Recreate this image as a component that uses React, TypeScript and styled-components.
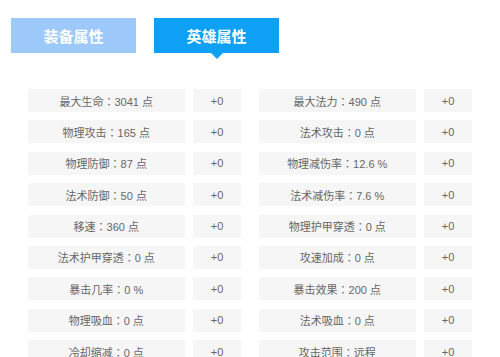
import React, { FunctionComponent } from "react";
import styled, { createGlobalStyle } from "styled-components";

const GlobalStyle = createGlobalStyle`
  body {
    margin: 0;
    background: #fff;
    font-family: "Liberation Sans", "Noto Sans CJK JP", sans-serif;
  }
`;

const Page = styled.div`
  padding: 18px 0 0 11px;
`;

const Tabs = styled.div`
  display: flex;
  gap: 18px;
`;

const Tab = styled.div<{ $active?: boolean }>`
  position: relative;
  width: 125px;
  height: 35px;
  display: flex;
  align-items: center;
  justify-content: center;
  color: #fff;
  font-size: 15px;
  font-weight: bold;
  font-family: "Noto Sans CJK SC", sans-serif;
  background: ${(p) => (p.$active ? "#0ea0f5" : "#9dc9fa")};

  &::after {
    content: "";
    display: ${(p) => (p.$active ? "block" : "none")};
    position: absolute;
    left: 50%;
    top: 100%;
    margin-left: -6px;
    border-left: 6px solid transparent;
    border-right: 6px solid transparent;
    border-top: 6px solid #0ea0f5;
  }
`;

const Table = styled.div`
  margin: 36px 0 0 17px;
  width: 444px;
  display: flex;
  flex-direction: column;
  gap: 8.4px;
`;

const Row = styled.div`
  display: grid;
  grid-template-columns: 213px 213px;
  column-gap: 18px;
`;

const Pair = styled.div`
  display: grid;
  grid-template-columns: 1fr 48px;
  column-gap: 8.5px;
`;

const Cell = styled.div`
  height: 23px;
  display: flex;
  align-items: center;
  justify-content: center;
  background: #f6f6f6;
  color: #666;
  font-size: 11px;
  white-space: nowrap;
`;

const stats: [string, string][] = [
  ["最大生命：3041 点", "最大法力：490 点"],
  ["物理攻击：165 点", "法术攻击：0 点"],
  ["物理防御：87 点", "物理减伤率：12.6 %"],
  ["法术防御：50 点", "法术减伤率：7.6 %"],
  ["移速：360 点", "物理护甲穿透：0 点"],
  ["法术护甲穿透：0 点", "攻速加成：0 点"],
  ["暴击几率：0 %", "暴击效果：200 点"],
  ["物理吸血：0 点", "法术吸血：0 点"],
  ["冷却缩减：0 点", "攻击范围：远程"],
];

const App: FunctionComponent = () => {
  return (
    <Page>
      <GlobalStyle />
      <Tabs>
        <Tab>装备属性</Tab>
        <Tab $active>英雄属性</Tab>
      </Tabs>
      <Table>
        {stats.map(([left, right]) => (
          <Row key={left}>
            <Pair>
              <Cell>{left}</Cell>
              <Cell>+0</Cell>
            </Pair>
            <Pair>
              <Cell>{right}</Cell>
              <Cell>+0</Cell>
            </Pair>
          </Row>
        ))}
      </Table>
    </Page>
  );
};

export default App;
